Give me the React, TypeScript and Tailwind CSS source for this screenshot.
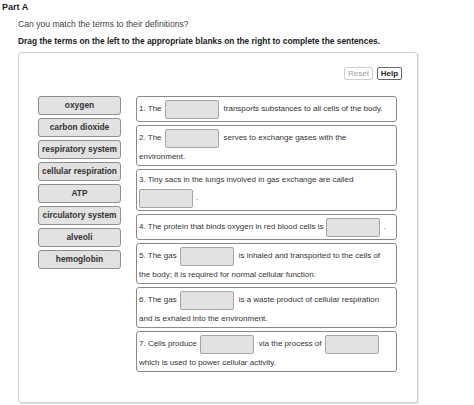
import React from "react";

const terms = [
  "oxygen",
  "carbon dioxide",
  "respiratory system",
  "cellular respiration",
  "ATP",
  "circulatory system",
  "alveoli",
  "hemoglobin",
];

function Blank({ before = 3, after = 5 }: { before?: number; after?: number }) {
  return (
    <span
      className="inline-block w-[54px] h-[19px] bg-[#e2e2e2] border border-[#a5a5a5] rounded-[2px] align-middle"
      style={{ marginLeft: before, marginRight: after }}
    />
  );
}

function BlankLine({ children }: { children: React.ReactNode }) {
  return <div className="h-[22px] flex items-center whitespace-nowrap">{children}</div>;
}

function TextLine({ children }: { children: React.ReactNode }) {
  return <div className="h-[15px] flex items-center whitespace-nowrap">{children}</div>;
}

function Box({ children }: { children: React.ReactNode }) {
  return (
    <div className="border border-[#8a8a8a] rounded-[3px] px-[2px] py-[1px] bg-white">{children}</div>
  );
}

export default function App() {
  return (
    <div
      className="w-[474px] h-[405px] bg-white text-[#222] overflow-hidden"
      style={{ fontFamily: '"Liberation Sans", Arial, sans-serif' }}
    >
      <div className="pl-[2px] pt-[1px] h-[13px] leading-[12px] text-[9px] font-bold text-[#222]">Part A</div>
      <div className="ml-[18px] mt-[5px] h-[12px] leading-[12px] text-[8.6px] text-[#444]">
        Can you match the terms to their definitions?
      </div>
      <div className="ml-[18px] mt-[5px] h-[12px] leading-[12px] text-[8.4px] font-bold text-[#222]">
        Drag the terms on the left to the appropriate blanks on the right to complete the sentences.
      </div>
      <div className="ml-[18px] mt-[5px] w-[400px] h-[351px] border border-[#cfcfcf] rounded-[3px] shadow-[1px_1px_1px_rgba(0,0,0,0.12)]">
        <div className="flex justify-end gap-[4px] pt-[14px] pr-[15px]">
          <div className="w-[29px] h-[13px] border border-[#cfcfcf] rounded-[2px] text-[8px] leading-[11px] text-[#a0a0a0] flex items-center justify-center">
            Reset
          </div>
          <div className="w-[25px] h-[13px] border border-[#666] rounded-[2px] text-[8px] leading-[11px] font-bold text-[#222] flex items-center justify-center">
            Help
          </div>
        </div>
        <div className="flex mt-[16px] pl-[19px] gap-[15px]">
          <div className="w-[83px] flex flex-col gap-[3px]">
            {terms.map((t) => (
              <div
                key={t}
                className="h-[19px] bg-[#e2e2e2] border border-[#8f8f8f] rounded-[3px] flex items-center justify-center text-[8.4px] font-bold text-[#333] whitespace-nowrap"
              >
                {t}
              </div>
            ))}
          </div>
          <div className="w-[261px] flex flex-col gap-[3px] text-[8px] text-[#333]">
            <Box>
              <BlankLine>
                1. The
                <Blank />
                transports substances to all cells of the body.
              </BlankLine>
            </Box>
            <Box>
              <BlankLine>
                2. The
                <Blank />
                serves to exchange gases with the
              </BlankLine>
              <TextLine>environment.</TextLine>
            </Box>
            <Box>
              <div className="h-[16px] flex items-center whitespace-nowrap pt-[2px]">
                3. Tiny sacs in the lungs involved in gas exchange are called
              </div>
              <BlankLine>
                <Blank before={0} after={3} />.
              </BlankLine>
            </Box>
            <Box>
              <BlankLine>
                4. The protein that binds oxygen in red blood cells is
                <Blank after={3} />.
              </BlankLine>
            </Box>
            <Box>
              <BlankLine>
                5. The gas
                <Blank />
                is inhaled and transported to the cells of
              </BlankLine>
              <TextLine>the body; it is required for normal cellular function.</TextLine>
            </Box>
            <Box>
              <BlankLine>
                6. The gas
                <Blank />
                is a waste product of cellular respiration
              </BlankLine>
              <TextLine>and is exhaled into the environment.</TextLine>
            </Box>
            <Box>
              <BlankLine>
                7. Cells produce
                <Blank />
                via the process of
                <Blank />
              </BlankLine>
              <TextLine>which is used to power cellular activity.</TextLine>
            </Box>
          </div>
        </div>
      </div>
    </div>
  );
}
